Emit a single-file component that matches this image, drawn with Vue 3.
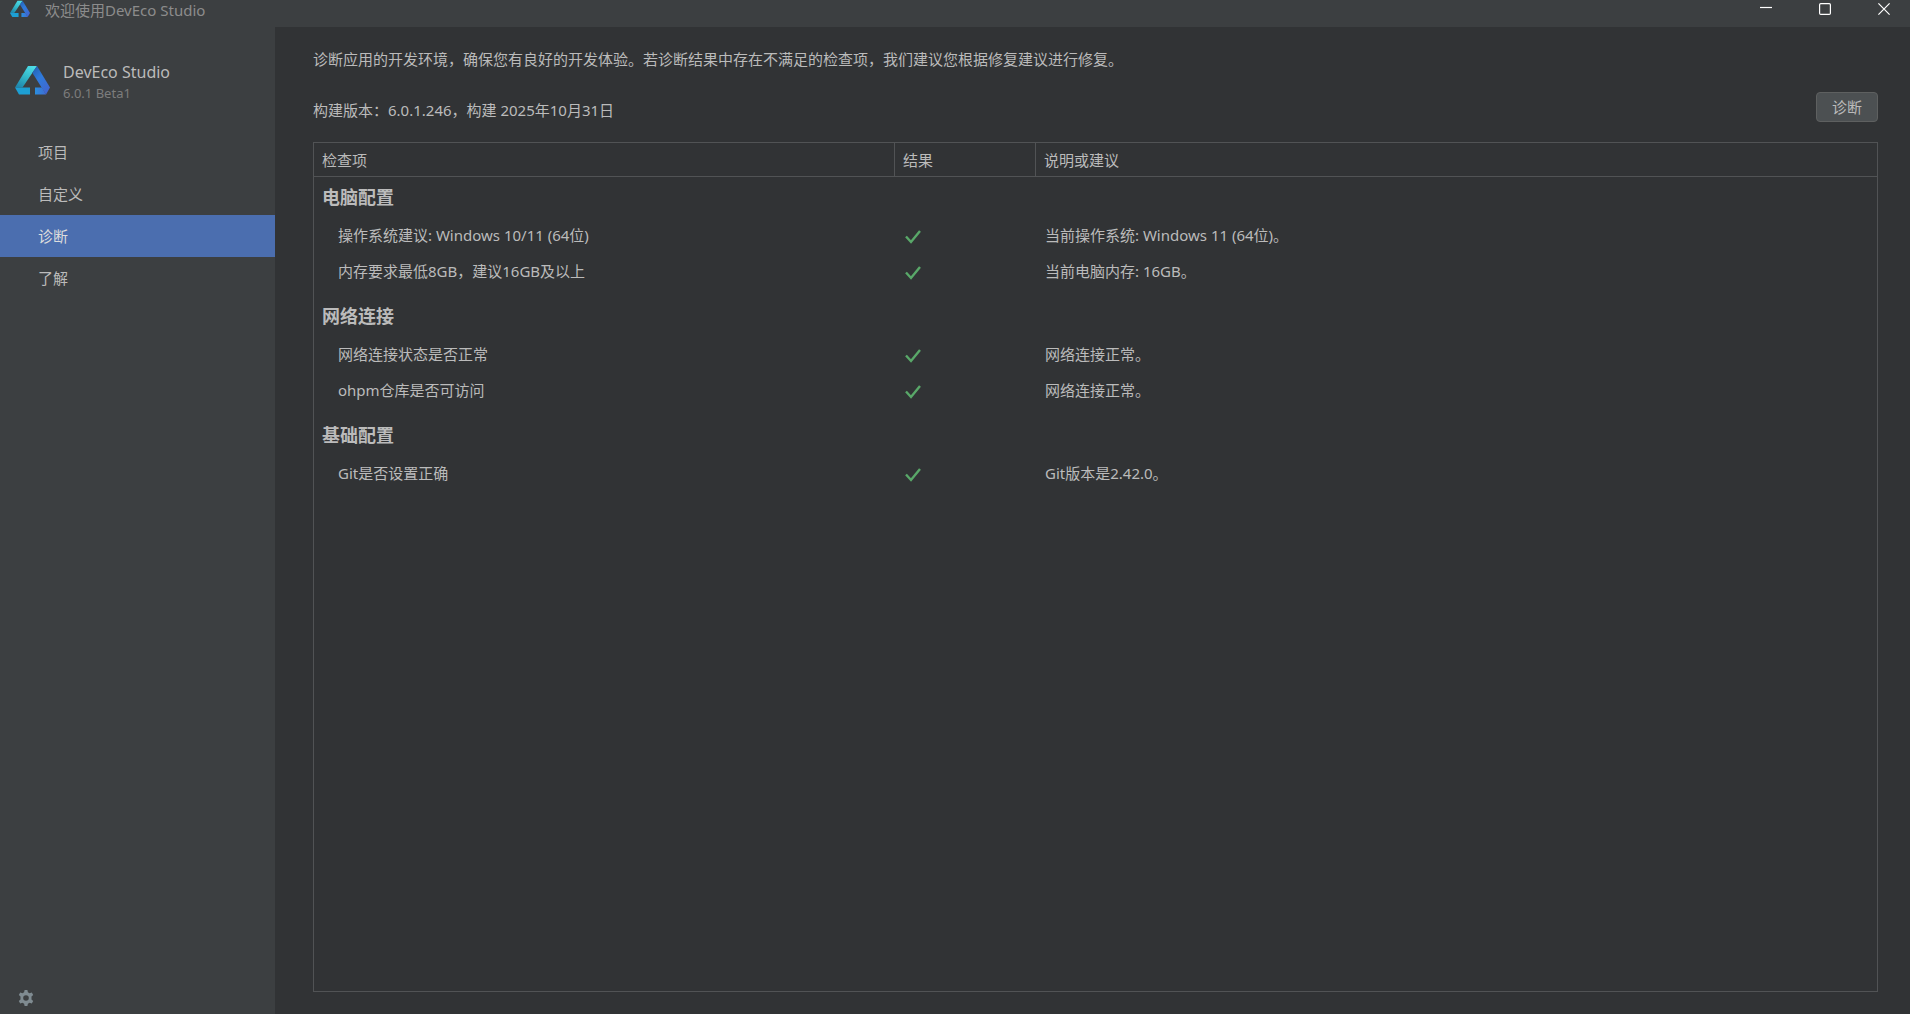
<template>
  <div class="welcome-window">
    <!-- Title bar -->
    <header class="title-bar">
      <svg class="title-logo" viewBox="0 0 35 29" aria-hidden="true">
        <use href="#deveco-logo" />
      </svg>
      <span class="title-text">欢迎使用DevEco Studio</span>
      <div class="window-controls">
        <button type="button" class="window-btn" aria-label="最小化">
          <svg viewBox="0 0 12 12"><path d="M0 4.5h12" /></svg>
        </button>
        <button type="button" class="window-btn" aria-label="最大化">
          <svg viewBox="0 0 12 12"><rect x="0.6" y="0.6" width="10.8" height="10.8" rx="1.2" /></svg>
        </button>
        <button type="button" class="window-btn" aria-label="关闭">
          <svg viewBox="0 0 12 12"><path d="M0.4 0.4l11.2 11.2M11.6 0.4L0.4 11.6" /></svg>
        </button>
      </div>
    </header>

    <div class="window-body">
      <!-- Sidebar -->
      <aside class="sidebar">
        <div class="brand">
          <svg class="brand-logo" viewBox="0 0 35 29" aria-hidden="true">
            <defs>
              <linearGradient id="logo-left" x1="0.7" y1="0" x2="0.2" y2="1">
                <stop offset="0" stop-color="#4ddbe6" />
                <stop offset="0.45" stop-color="#35bccb" />
                <stop offset="1" stop-color="#1f86ac" />
              </linearGradient>
              <linearGradient id="logo-right" x1="0.2" y1="0" x2="0.8" y2="1">
                <stop offset="0" stop-color="#2463b4" />
                <stop offset="0.4" stop-color="#2f7bdc" />
                <stop offset="1" stop-color="#4364cf" />
              </linearGradient>
              <linearGradient id="logo-foot" x1="0" y1="0" x2="1" y2="0">
                <stop offset="0" stop-color="#2a8fdf" />
                <stop offset="1" stop-color="#3f6bd2" />
              </linearGradient>
            </defs>
            <g id="deveco-logo">
              <path d="M13 0h9L7.500 21.500H0z" fill="url(#logo-left)" />
              <path d="M22 0l13 21.500-4 7L17.300 6.800z" fill="url(#logo-right)" />
              <path d="M0 21.500h15v7H4z" fill="#1d9fd3" />
              <path d="M20 21.500h7l4 7H20z" fill="url(#logo-foot)" />
            </g>
          </svg>
          <div class="brand-text">
            <span class="brand-name">DevEco Studio</span>
            <span class="brand-version">6.0.1 Beta1</span>
          </div>
        </div>

        <nav class="nav">
          <button
            v-for="item in navItems"
            :key="item"
            type="button"
            :class="['nav-item', { 'active': item === activeItem }]"
            @click="activeItem = item"
          >
            {{ item }}
          </button>
        </nav>

        <button type="button" class="settings-btn" aria-label="设置">
          <svg viewBox="0 0 16 16">
            <path
              fill-rule="evenodd"
              d="M6.600 0h2.800l.5 2.300 1.600.9 2.300-.7 1.400 2.400L13.500 6.600v2.800l1.700 1.700-1.400 2.400-2.300-.7-1.600.9L9.400 16H6.600l-.5-2.300-1.600-.9-2.300.7-1.400-2.400L2.500 9.400V6.600L.8 4.900l1.400-2.400 2.300.7 1.600-.9zM8 5.200a2.800 2.800 0 1 0 0 5.600a2.800 2.800 0 1 0 0-5.600z"
            />
          </svg>
        </button>
      </aside>

      <!-- Diagnosis page -->
      <main class="content">
        <p class="intro">诊断应用的开发环境，确保您有良好的开发体验。若诊断结果中存在不满足的检查项，我们建议您根据修复建议进行修复。</p>
        <div class="build-row">
          <p class="build-info">构建版本：6.0.1.246，构建 2025年10月31日</p>
          <button type="button" class="diagnose-btn">诊断</button>
        </div>

        <div class="result-panel">
          <table class="result-table">
            <colgroup>
              <col class="col-item" />
              <col class="col-result" />
              <col />
            </colgroup>
            <thead>
              <tr>
                <th scope="col">检查项</th>
                <th scope="col">结果</th>
                <th scope="col">说明或建议</th>
              </tr>
            </thead>
            <tbody v-for="group in groups" :key="group.title">
              <tr>
                <th class="group-title" colspan="3" scope="rowgroup">{{ group.title }}</th>
              </tr>
              <tr v-for="check in group.checks" :key="check.name">
                <td class="check-name">{{ check.name }}</td>
                <td class="check-result">
                  <svg viewBox="0 0 16 14" role="img" aria-label="通过">
                    <path d="M1 6.500l5 5.500L15 1" />
                  </svg>
                </td>
                <td class="check-detail">{{ check.detail }}</td>
              </tr>
            </tbody>
          </table>
        </div>
      </main>
    </div>
  </div>
</template>

<script setup>
import { ref } from 'vue';

const navItems = ['项目', '自定义', '诊断', '了解'];
const activeItem = ref('诊断');

const groups = [
  {
    title: '电脑配置',
    checks: [
      { name: '操作系统建议: Windows 10/11 (64位)', detail: '当前操作系统: Windows 11 (64位)。' },
      { name: '内存要求最低8GB，建议16GB及以上', detail: '当前电脑内存: 16GB。' }
    ]
  },
  {
    title: '网络连接',
    checks: [
      { name: '网络连接状态是否正常', detail: '网络连接正常。' },
      { name: 'ohpm仓库是否可访问', detail: '网络连接正常。' }
    ]
  },
  {
    title: '基础配置',
    checks: [
      { name: 'Git是否设置正确', detail: 'Git版本是2.42.0。' }
    ]
  }
];
</script>

<style>
body {
  margin: 0;
  background: #313335;
}
</style>

<style scoped>
.welcome-window {
  display: flex;
  flex-direction: column;
  min-height: 100vh;
  background: #313335;
  color: #bbbbbb;
  font-family: 'Noto Sans', 'Noto Sans CJK SC', sans-serif;
  font-size: 15px;
  line-height: 20px;
}

button {
  padding: 0;
  border: none;
  background: none;
  color: inherit;
  font: inherit;
}

p {
  margin: 0;
}

/* Title bar */
.title-bar {
  display: flex;
  align-items: flex-start;
  height: 27px;
  padding: 0 3px 0 10px;
  box-sizing: border-box;
  background: #3c3f41;
}

.title-logo {
  width: 20px;
  height: 18px;
}

.title-text {
  margin-left: 15px;
  color: #8c8c8c;
}

.window-controls {
  display: flex;
  gap: 13px;
  margin-left: auto;
}

.window-btn {
  display: flex;
  align-items: center;
  justify-content: center;
  width: 46px;
  height: 18px;
}

.window-btn svg {
  width: 12px;
  height: 12px;
  fill: none;
  stroke: #ffffff;
  stroke-width: 1.2;
}

.window-body {
  display: flex;
  flex: 1;
}

/* Sidebar */
.sidebar {
  display: flex;
  flex-direction: column;
  flex-shrink: 0;
  width: 275px;
  background: #3c3f41;
}

.brand {
  display: flex;
  align-items: flex-start;
  gap: 13px;
  padding: 34px 15px 28px;
}

.brand-logo {
  width: 35px;
  height: 29px;
  margin-top: 5px;
}

.brand-text {
  display: flex;
  flex-direction: column;
}

.brand-name {
  font-size: 16px;
  line-height: 22px;
}

.brand-version {
  color: #7d7d7d;
  font-size: 13px;
}

.nav {
  display: flex;
  flex-direction: column;
}

.nav-item {
  height: 42px;
  padding-left: 38px;
  text-align: left;
}

.nav-item.active {
  background: #4b6eaf;
  color: #dddddd;
}

.settings-btn {
  width: 16px;
  height: 16px;
  margin: auto 0 8px 18px;
}

.settings-btn svg {
  display: block;
  fill: #7f8b91;
}

/* Content */
.content {
  display: flex;
  flex: 1;
  flex-direction: column;
  min-width: 0;
  padding: 22px 32px 22px 38px;
}

.build-row {
  display: flex;
  align-items: flex-end;
  justify-content: space-between;
  margin: 23px 0 20px;
}

.build-info {
  line-height: 24px;
}

.diagnose-btn {
  width: 62px;
  height: 30px;
  border: 1px solid #5e6060;
  border-radius: 4px;
  background: #4c5052;
}

.result-panel {
  flex: 1;
  border: 1px solid #515355;
}

.result-table {
  width: 100%;
  table-layout: fixed;
  border-spacing: 0;
}

.col-item {
  width: 580px;
}

.col-result {
  width: 141px;
}

.result-table th,
.result-table td {
  box-sizing: border-box;
  padding: 0 8px;
  text-align: left;
}

.result-table thead th {
  height: 34px;
  border-bottom: 1px solid #515355;
  font-weight: 400;
}

.result-table thead th + th {
  border-left: 1px solid #515355;
}

.result-table .group-title {
  height: 40px;
  font-size: 18px;
  font-weight: 700;
}

.result-table tbody + tbody .group-title {
  height: 47px;
  padding-top: 6px;
}

.result-table td {
  height: 36px;
}

.result-table .check-name {
  padding-left: 24px;
}

.result-table .check-result {
  padding-top: 3px;
  padding-left: 11px;
}

.result-table .check-detail {
  padding-left: 10px;
}

.check-result svg {
  display: block;
  width: 16px;
  height: 14px;
  fill: none;
  stroke: #59a869;
  stroke-width: 2.4;
}
</style>
